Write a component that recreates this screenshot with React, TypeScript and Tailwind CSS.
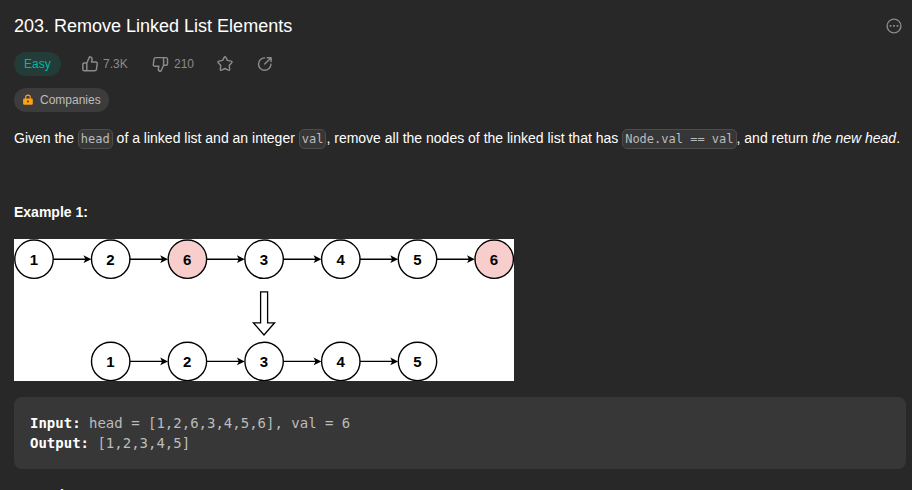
import React from "react";

const STEP = 76.7;
const TOP_Y = 20.2;
const BOTTOM_Y = 122.4;

type ListNode = { label: string; slot: number; removed?: boolean };

const before: ListNode[] = [
  { label: "1", slot: 0 },
  { label: "2", slot: 1 },
  { label: "6", slot: 2, removed: true },
  { label: "3", slot: 3 },
  { label: "4", slot: 4 },
  { label: "5", slot: 5 },
  { label: "6", slot: 6, removed: true },
];

const after: ListNode[] = [
  { label: "1", slot: 1 },
  { label: "2", slot: 2 },
  { label: "3", slot: 3 },
  { label: "4", slot: 4 },
  { label: "5", slot: 5 },
];

function Chain({ nodes, y }: { nodes: ListNode[]; y: number }) {
  return (
    <g>
      {nodes.map((n, i) => {
        const x = 20 + n.slot * STEP;
        return (
          <g key={n.slot}>
            <circle cx={x} cy={y} r={19.2} fill={n.removed ? "#f8cecc" : "#fff"} stroke="#000" strokeWidth={1.4} />
            <text x={x - 0.2} y={y + 5.4} textAnchor="middle" fontSize={15} fontWeight={700} fill="#000">
              {n.label}
            </text>
            {i < nodes.length - 1 && (
              <>
                <path d={`M${x + 19.2} ${y}H${x + 52}`} stroke="#000" strokeWidth={1.4} />
                <path d={`M${x + 57.3} ${y}l-7.8 3.9 1.9-3.9-1.9-3.9z`} fill="#000" />
              </>
            )}
          </g>
        );
      })}
    </g>
  );
}

function Diagram() {
  return (
    <svg width={500} height={142} viewBox="0 0 500 142" className="block shrink-0 bg-white font-['Liberation_Sans',sans-serif]">
      <Chain nodes={before} y={TOP_Y} />
      <path d="M246.6 52.8h7v31h7L250 96l-10.6-12.2h7.2z" fill="#fff" stroke="#000" strokeWidth={1.3} />
      <Chain nodes={after} y={BOTTOM_Y} />
    </svg>
  );
}

const stroke = {
  fill: "none",
  stroke: "currentColor",
  strokeWidth: 1.45,
  strokeLinejoin: "round" as const,
  strokeLinecap: "round" as const,
};

function ThumbUp() {
  return (
    <svg width={18} height={18} viewBox="0 0 18 18" {...stroke}>
      <path d="M5.8 8 8.3 2.4Q8.6 1.7 9.4 1.9C10.8 2.3 11.3 3.5 11 4.8L10.5 7h4.1q1.8 0 1.6 1.8l-.7 5.3q-.2 1.7-1.8 1.7H3.3q-1.5 0-1.5-1.5V9.5Q1.8 8 3.3 8zM5.8 8v7.8" />
    </svg>
  );
}

function ThumbDown() {
  return (
    <svg width={18} height={18} viewBox="0 0 18 18" {...stroke}>
      <path d="M11.6 10.3 9.1 15.8Q8.8 16.5 8 16.3C6.6 15.9 6.1 14.7 6.4 13.4L6.9 11.3H2.9Q1.1 11.3 1.3 9.5l.7-5.2q.2-1.7 1.8-1.7h10.2q1.5 0 1.5 1.5v4.7q0 1.5-1.5 1.5zM11.6 10.3V2.6" />
    </svg>
  );
}

function Star() {
  return (
    <svg width={18} height={18} viewBox="0 0 18 18" {...stroke}>
      <path d="M8.2 2.3q.8-1.3 1.6 0l1.6 3.1 3.7.7q1.5.4.6 1.6l-2.5 2.7.5 3.7q.1 1.5-1.3 1L9 13.5l-3.4 1.6q-1.4.5-1.3-1l.5-3.7-2.5-2.7q-.9-1.2.6-1.6l3.7-.7z" />
    </svg>
  );
}

function Share() {
  return (
    <svg width={18} height={18} viewBox="0 0 18 18" {...stroke}>
      <path d="M8.6 2.9A6.2 6.2 0 1 0 14.9 9.2M8.7 9.1l6.2-6.2M11.3 2.7h3.8v3.8" />
    </svg>
  );
}

function Lock() {
  return (
    <svg width={12} height={12} viewBox="0 0 12 12">
      <path d="M3.6 5V3.5a2.35 2.35 0 0 1 4.7 0V5" fill="none" stroke="#ffa116" strokeWidth={1.1} />
      <rect x={1.1} y={4.5} width={9.7} height={6.3} rx={1.3} fill="#ffa116" />
      <circle cx={5.95} cy={7.5} r={1} fill="#3c3c3c" />
    </svg>
  );
}

function Code({ children }: { children: React.ReactNode }) {
  return (
    <code className="inline-block h-5 rounded-[5px] border border-[#4c4c4c] bg-[#363636] px-0.5 align-middle font-['DejaVu_Sans_Mono',monospace] text-xs leading-[18px] text-[#bcbcbc]">
      {children}
    </code>
  );
}

export default function App() {
  return (
    <main className="flex h-[490px] w-[912px] flex-col overflow-hidden bg-[#282828] pl-3.5 font-['Liberation_Sans',Arial,sans-serif] text-sm text-white">
      <header className="mt-3 flex h-7 shrink-0 items-center justify-between pr-[9px]">
        <h1 className="text-lg leading-7">203. Remove Linked List Elements</h1>
        <svg width={18} height={18} viewBox="0 0 18 18" className="text-[#8b8b8b]">
          <circle cx={9} cy={9} r={6.9} fill="none" stroke="currentColor" strokeWidth={1.4} />
          <path d="M4.6 8h1.8v1.8H4.6zM8.1 8h1.8v1.8H8.1zM11.6 8h1.8v1.8h-1.8z" fill="currentColor" />
        </svg>
      </header>

      <div className="mt-3 flex h-6 shrink-0 items-center text-xs text-[#8b8b8b]">
        <span className="flex h-6 w-[47px] items-center rounded-full bg-[#233c38] pl-2.5 text-[#00b8a3]">Easy</span>
        <div className="ml-5 flex w-[71px] items-center gap-1">
          <ThumbUp />
          <span>7.3K</span>
        </div>
        <div className="flex w-16 items-center gap-1">
          <ThumbDown />
          <span>210</span>
        </div>
        <div className="w-10">
          <Star />
        </div>
        <Share />
      </div>

      <div className="mt-3 flex h-6 w-[95px] shrink-0 items-center gap-1.5 rounded-full bg-[#3c3c3c] pl-2 text-xs text-[#bcbcbc]">
        <Lock />
        <span>Companies</span>
      </div>

      <p className="mt-4 h-5 shrink-0 whitespace-nowrap leading-5">
        Given the <Code>head</Code> of a linked list and an integer <Code>val</Code>, remove all the nodes of the linked
        list that has <Code>Node.val == val</Code>, and return <em>the new head</em>.
      </p>

      <p className="mt-[54px] h-5 shrink-0 font-bold leading-5">Example 1:</p>

      <div className="mt-[17px] shrink-0">
        <Diagram />
      </div>

      <pre className="mt-4 mr-1.5 h-[72px] shrink-0 rounded-lg bg-[#373737] p-4 font-['DejaVu_Sans_Mono',monospace] text-sm leading-5 text-[#bcbcbc]">
        <b className="text-white">Input:</b>
        {" head = [1,2,6,3,4,5,6], val = 6\n"}
        <b className="text-white">Output:</b>
        {" [1,2,3,4,5]"}
      </pre>

      <p className="mt-4 h-5 shrink-0 font-bold leading-5">Example 2:</p>
    </main>
  );
}
